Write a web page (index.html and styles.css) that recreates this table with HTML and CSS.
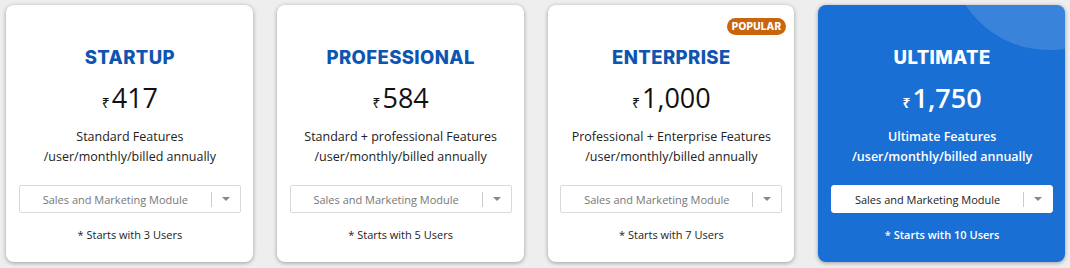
FILE: index.html
```html
<!DOCTYPE html>
<html>
<head>
<meta charset="utf-8">
<link rel="stylesheet" href="styles.css">
</head>
<body>
<div class="plans">
  <div class="card">
    <div class="title">STARTUP</div>
    <div class="price"><span class="cur">₹</span>417</div>
    <div class="feat">Standard Features<br>/user/monthly/billed annually</div>
    <div class="select"><span class="label">Sales and Marketing Module</span><span class="sep"></span><span class="caret"></span></div>
    <div class="users">* Starts with 3 Users</div>
  </div>
  <div class="card">
    <div class="title">PROFESSIONAL</div>
    <div class="price"><span class="cur">₹</span>584</div>
    <div class="feat">Standard + professional Features<br>/user/monthly/billed annually</div>
    <div class="select"><span class="label">Sales and Marketing Module</span><span class="sep"></span><span class="caret"></span></div>
    <div class="users">* Starts with 5 Users</div>
  </div>
  <div class="card">
    <span class="badge">POPULAR</span>
    <div class="title">ENTERPRISE</div>
    <div class="price"><span class="cur">₹</span>1,000</div>
    <div class="feat">Professional + Enterprise Features<br>/user/monthly/billed annually</div>
    <div class="select"><span class="label">Sales and Marketing Module</span><span class="sep"></span><span class="caret"></span></div>
    <div class="users">* Starts with 7 Users</div>
  </div>
  <div class="card ultimate">
    <span class="glow"></span>
    <div class="title">ULTIMATE</div>
    <div class="price"><span class="cur">₹</span>1,750</div>
    <div class="feat">Ultimate Features<br>/user/monthly/billed annually</div>
    <div class="select"><span class="label">Sales and Marketing Module</span><span class="sep"></span><span class="caret"></span></div>
    <div class="users">* Starts with 10 Users</div>
  </div>
</div>
</body>
</html>
```

FILE: styles.css
```css
* { box-sizing: border-box; }
html, body { margin: 0; padding: 0; }
body {
  background: #eeeeee;
  font-family: "Open Sans", "Noto Sans", sans-serif;
  width: 1070px;
  height: 268px;
  overflow: hidden;
}
.plans {
  display: flex;
  gap: 24px;
  padding: 5px 5px 6px 6px;
  height: 268px;
}
.card {
  position: relative;
  overflow: hidden;
  flex: 1;
  height: 257px;
  background: #ffffff;
  border-radius: 8px;
  box-shadow: 0 1px 4px rgba(0,0,0,0.35);
  display: flex;
  flex-direction: column;
  align-items: center;
  padding: 41px 12px 0 13px;
  color: #111;
}
.title {
  font-family: "Inter", "Liberation Sans", sans-serif;
  font-weight: 800;
  font-size: 18.5px;
  line-height: 22px;
  color: #0d55b1;
  letter-spacing: 0.4px;
}
.price {
  margin-top: 13px;
  font-size: 27px;
  line-height: 34px;
  color: #111;
}
.cur {
  font-family: "Noto Sans", "DejaVu Sans", sans-serif;
  font-size: 14px;
  margin-right: 2px;
}
.feat {
  margin-top: 7px;
  font-size: 12.5px;
  line-height: 20px;
  text-align: center;
  color: #222;
}
.select {
  margin-top: 18px;
  width: 222px;
  height: 28px;
  border: 1px solid #d9d9d9;
  border-radius: 2px;
  background: #fff;
  display: flex;
  align-items: center;
}
.label {
  flex: 1;
  text-align: center;
  font-size: 11px;
  color: #777;
}
.sep {
  width: 1px;
  height: 15px;
  background: #cccccc;
}
.caret {
  width: 28px;
  height: 26px;
  position: relative;
}
.caret::after {
  content: "";
  position: absolute;
  left: 10px;
  top: 11px;
  border-left: 4px solid transparent;
  border-right: 4px solid transparent;
  border-top: 4px solid #888;
}
.users {
  margin-top: 14px;
  font-size: 11px;
  line-height: 16px;
  color: #222;
}
.badge {
  position: absolute;
  top: 13px;
  right: 8px;
  background: #c9650d;
  color: #fff;
  font-family: "Inter", "Liberation Sans", sans-serif;
  font-weight: 800;
  font-size: 10px;
  line-height: 17px;
  padding: 0 5px;
  border-radius: 9px;
  letter-spacing: 0.2px;
}
.ultimate {
  background: #1a6fd5;
  color: #fff;
}
.glow {
  position: absolute;
  left: 131px;
  top: -155px;
  width: 200px;
  height: 200px;
  border-radius: 50%;
  background: rgba(255,255,255,0.14);
}
.ultimate .title, .ultimate .price, .ultimate .feat, .ultimate .users {
  color: #fff;
  position: relative;
}
.ultimate .price { font-weight: 600; }
.ultimate .feat, .ultimate .users { font-weight: 600; }
.ultimate .select { border-color: #fff; border-radius: 3px; position: relative; }
.ultimate .label { color: #222; }
```
